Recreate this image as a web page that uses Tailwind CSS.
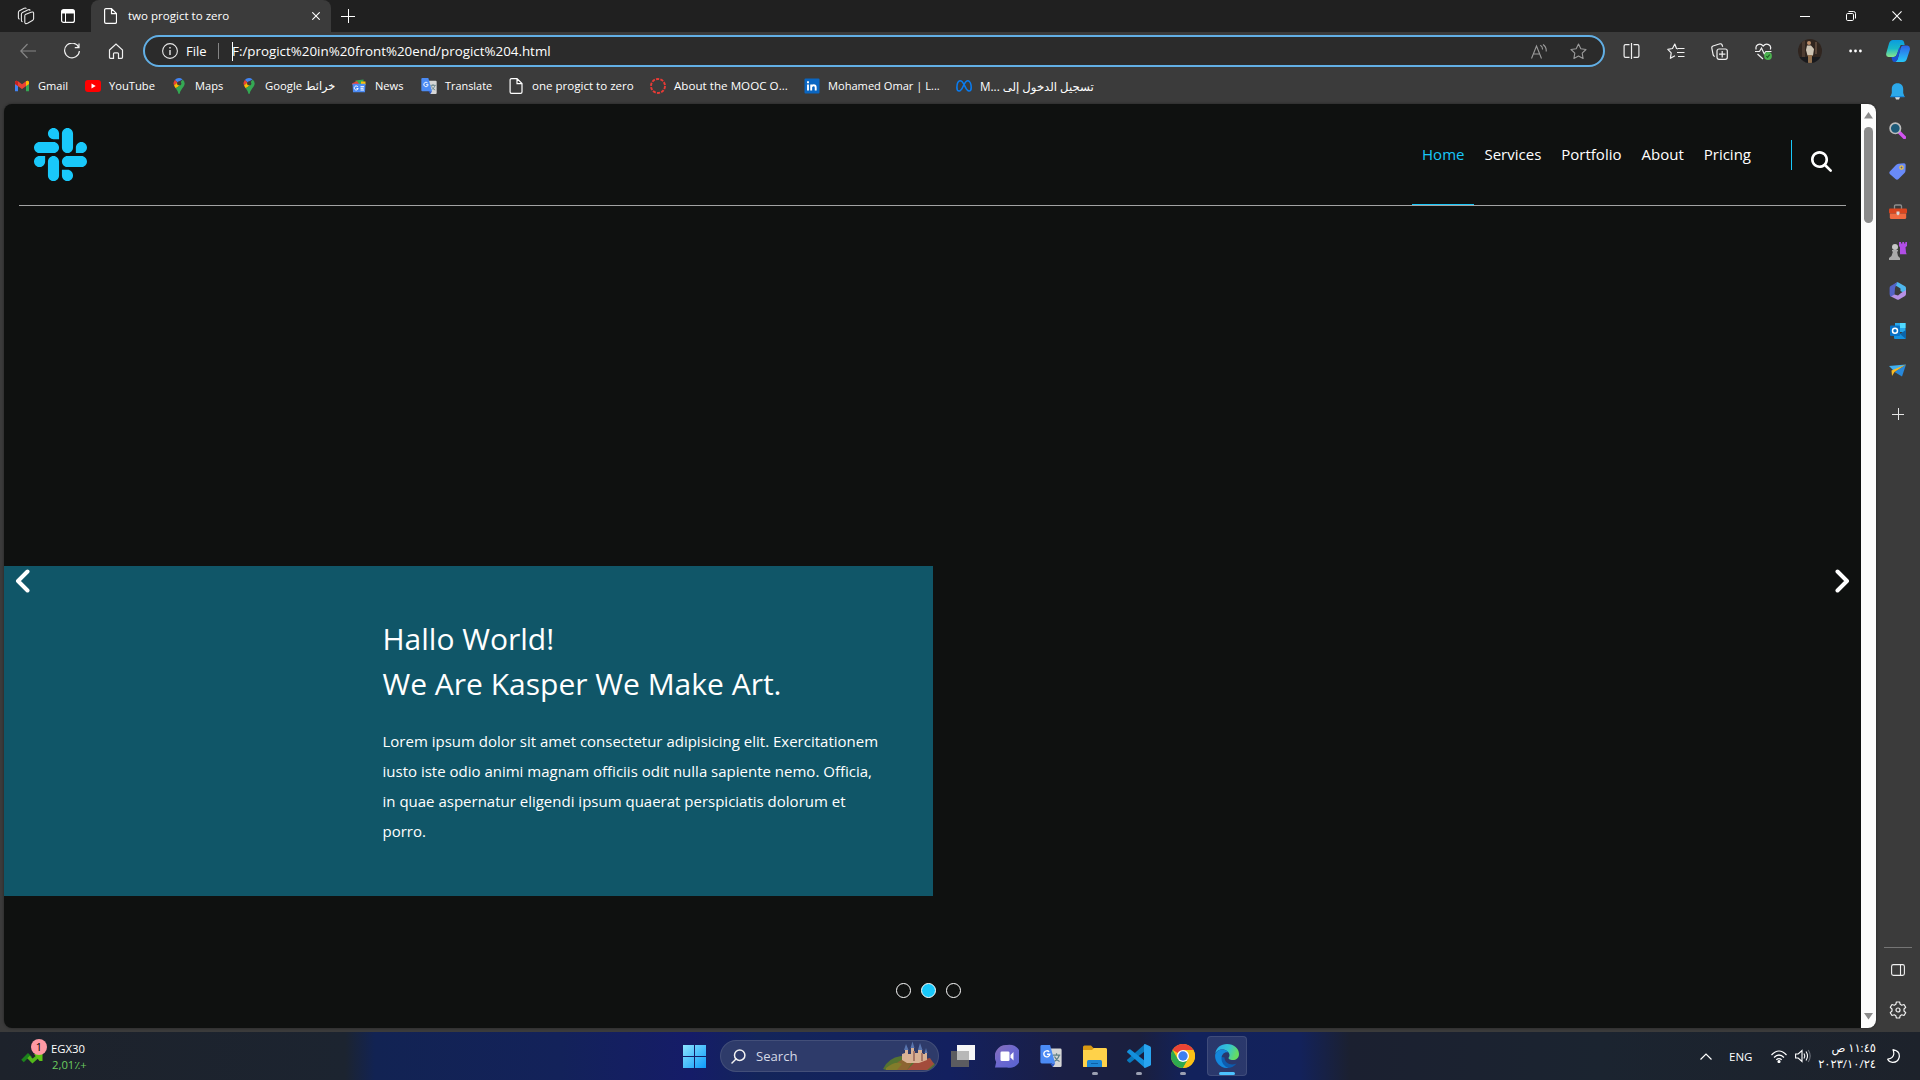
<!DOCTYPE html>
<html lang="en">
<head>
<meta charset="utf-8">
<title>two progict to zero</title>
<script src="https://cdn.jsdelivr.net/npm/@tailwindcss/browser@4"></script>
</head>
<body class="flex h-[1080px] w-[1920px] flex-col overflow-hidden bg-[#3b3b3b] font-['Open_Sans','Noto_Sans','DejaVu_Sans',sans-serif] text-white">
<svg class="hidden">
  <symbol id="file" viewBox="0 0 13 16"><path d="M2 .6h5.500l5 5V14a1.400 1.400 0 0 1-1.400 1.400H2A1.400 1.400 0 0 1 .6 14V2A1.400 1.400 0 0 1 2 .6zM7.500.6v5h5" fill="none" stroke="#fff" stroke-width="1.200"/></symbol>
  <symbol id="pin" viewBox="0 0 11 16"><path d="M5.500 0A5.500 5.500 0 0 0 1.300 2L4 4.300 9 1.400A5.400 5.400 0 0 0 5.500 0z" fill="#4285f4"/><path d="M1.300 2a5.500 5.500 0 0 0-.8 5.500L4 4.300z" fill="#ea4335"/><path d="M.5 7.500c.3.900 1 1.800 1.700 2.800L7.200 7A2.300 2.300 0 0 1 4 4.300z" fill="#fbbc04"/><path d="M9.200 1.500A5.500 5.500 0 0 1 10 8.700C8.500 11 6.700 12.500 6.200 15.500c-.2.700-1.100.7-1.300 0-.4-2.200-1.500-3.600-2.700-5.200L7.200 7a2.200 2.200 0 0 0 0-3z" fill="#34a853"/><circle cx="5.500" cy="5.400" r="1.900" fill="#3b3b3b"/></symbol>
  <symbol id="translate" viewBox="0 0 24 26"><path d="M9 5h13a1.500 1.500 0 0 1 1.500 1.500v17A1.500 1.500 0 0 1 22 25H14z" fill="#d6d6d6"/><path d="M14 12h8M18 10v2M21 12c-.8 3-3 5.500-5.500 7M15.800 13.500c1 2.500 3 4.500 5.500 5.500" stroke="#5f7f86" stroke-width="1.300" fill="none"/><path d="M2 1h9l5.500 20H2A1.500 1.500 0 0 1 .5 19.500v-17A1.500 1.500 0 0 1 2 1z" fill="#4b8bf5"/><path d="M11 21h5.500L14 25z" fill="#2a56c6"/><path d="M10 8.500a3.300 3.300 0 1 0 .8 2.600H7.700" fill="none" stroke="#fff" stroke-width="1.500"/></symbol>
</svg>

<!-- Tab strip -->
<header class="flex h-8 shrink-0 bg-[#202020]">
  <div class="flex w-[91px] items-center pl-[17px]">
    <svg class="h-[18px] w-[18px]" viewBox="0 0 18 18" fill="none" stroke="#e8e8e8" stroke-width="1.100"><path d="M8.300 7.600 14 5.200q2.400-.8 2.600.9v5.700q0 1.200-1.200 1.800l-4.800 2.700q-2.400 1-2.800-.8V9q0-1 .5-1.400z"/><path d="M5.600 14.700q-1.200-.2-1.200-1.500V7.300q0-1.200 1.100-1.800l5.700-2.700q1.600-.5 2 .7M2.500 12.200q-1.100-.3-1.100-1.400V5.500q0-1.100 1-1.700l4.800-2.500q1.600-.6 2.200.3"/></svg>
    <svg class="ml-[26px] h-[14px] w-[14px]" viewBox="0 0 14 14"><rect x=".6" y=".6" width="12.800" height="12.800" rx="2" fill="none" stroke="#fff" stroke-width="1.200"/><path d="M1 1h12v3.500H1z" fill="#fff"/><path d="M4.500 4v9" stroke="#fff"/></svg>
  </div>
  <div class="flex w-[240px] items-center rounded-t-lg bg-[#3b3b3b] pl-[13px]">
    <svg class="h-4 w-[13px]"><use href="#file"/></svg>
    <span class="ml-[11px] w-[183.5px] whitespace-nowrap text-[11.550px] leading-4">two progict to zero</span>
    <svg class="h-2 w-2" viewBox="0 0 8 8" stroke="#fff" stroke-width="1.100"><path d="M.3.300l7.400 7.400M7.700.3.300 7.700"/></svg>
  </div>
  <div class="flex w-[34px] items-center justify-center"><svg class="h-[14px] w-[14px]" viewBox="0 0 14 14" stroke="#fff"><path d="M7.500 0v14M0 7.500h14"/></svg></div>
  <div class="ml-auto flex items-center gap-9 pr-[18px]">
    <svg class="h-[10px] w-[10px]" viewBox="0 0 10 10" stroke="#fff"><path d="M0 5.500h10"/></svg>
    <svg class="h-[10px] w-[10px]" viewBox="0 0 10 10" fill="none" stroke="#fff"><rect x=".5" y="2.500" width="7" height="7" rx="1.200"/><path d="M2.500.500H7.500Q9.500.500 9.500 2.500V7.500"/></svg>
    <svg class="h-[10px] w-[10px]" viewBox="0 0 11 11" stroke="#fff" stroke-width="1.200"><path d="M.5.500l10 10M10.500.5.500 10.500"/></svg>
  </div>
</header>

<div class="flex h-[1000px] shrink-0">
  <div class="flex w-[1876px] flex-col">
    <!-- Address bar -->
    <div class="flex h-[38px] items-center">
      <div class="flex w-[143px] items-center gap-7 pl-5">
        <svg class="h-4 w-4" viewBox="0 0 16 16" fill="none" stroke="#858585" stroke-width="1.200"><path d="M7.500 1 .8 8l6.700 7M.8 8H16"/></svg>
        <svg class="h-4 w-4" viewBox="0 0 16 16" fill="none" stroke="#f0f0f0" stroke-width="1.200"><path d="M14.800 4.500A7.400 7.400 0 1 0 15.400 8M15 .5v4.200h-4.200"/></svg>
        <svg class="h-4 w-4" viewBox="0 0 16 16" fill="none" stroke="#f0f0f0" stroke-width="1.200"><path d="M1.500 7 8 1l6.500 6v7.300q0 1-1 1h-3v-4.500q0-1-1-1h-3q-1 0-1 1v4.500h-3q-1 0-1-1z"/></svg>
      </div>
      <div class="flex h-8 w-[1462px] items-center rounded-full border-2 border-[#62afe5] bg-[#2b2b2b] pl-[17px] pr-4">
        <svg class="h-4 w-4" viewBox="0 0 16 16" fill="none" stroke="#e8e8e8" stroke-width="1.100"><circle cx="8" cy="8" r="7.400"/><path d="M8 7v5M8 4v1.400" stroke-width="1.400"/></svg>
        <span class="ml-2 w-8 text-[13px] leading-4">File</span>
        <span class="h-4 w-px bg-[#858585]"></span>
        <span class="ml-[13px] h-[19px] w-px bg-white"></span>
        <span class="-ml-px whitespace-nowrap text-[13.360px] leading-4">F:/progict%20in%20front%20end/progict%204.html</span>
        <svg class="ml-auto h-[15px] w-4" viewBox="0 0 16 15" fill="none" stroke="#9b9b9b" stroke-width="1.100"><path d="M.5 14.500 5.500 2l5 12.500M2.300 10h6.400M9.300 1.200q2.400 1.300 2.200 4.300M12 .5q3.600 2.500 3.200 7"/></svg>
        <svg class="ml-[23px] h-[17px] w-[17px]" viewBox="0 0 17 17" fill="none" stroke="#9b9b9b" stroke-width="1.100" stroke-linejoin="round"><path d="m8.500 1 2.300 4.800 5.200.7-3.800 3.700.9 5.300-4.600-2.500-4.600 2.500.9-5.300L1 6.500l5.200-.7z"/></svg>
      </div>
      <div class="flex flex-1 items-center pl-[18px]">
        <svg class="h-4 w-[17px]" viewBox="0 0 17 16" fill="none" stroke="#f0f0f0" stroke-width="1.200"><path d="M8.500 0v16M6.500 1.600H2.500q-1.400 0-1.400 1.400v10q0 1.400 1.400 1.400h4M10.500 1.600h4q1.400 0 1.400 1.400v10q0 1.400-1.400 1.400h-4"/></svg>
        <svg class="ml-[27px] h-[17px] w-[18px]" viewBox="0 0 18 17" fill="none" stroke="#f0f0f0" stroke-width="1.200" stroke-linejoin="round"><path d="M11 5.800 9.500 5.500 7.800 1 5.500 5.500.8 6.300l3.400 3.500-.8 5.500 4.600-2.500M11 5.500h6.500M10 9.500h7.500M11 13.500h6.500"/></svg>
        <svg class="ml-[26px] h-[17px] w-[17px]" viewBox="0 0 17 17" fill="none" stroke="#f0f0f0" stroke-width="1.200"><rect x="6" y="6" width="10.300" height="10.300" rx="2"/><path d="M11.200 8v6.400M8 11.200h6.400M3.800 13.500Q2.500 13 2.200 12L.8 5q-.2-1.500 1.200-2L9 .8q1.500-.3 2 1l.7 2"/></svg>
        <svg class="ml-[27px] h-[17px] w-[17px]" viewBox="0 0 17 17" fill="none" stroke="#f0f0f0" stroke-width="1.200"><path d="M1.200 6.500C-.2 2 5-.8 8.200 3 11.500-.8 17 2 15.300 6.500M0 8.500h4.500L6.500 5l2.800 6 1.500-2.500H16.500M2.500 11l5.500 5"/><circle cx="13" cy="13" r="3.900" fill="#4cb150" stroke="none"/><path d="m11.300 13.200 1.200 1.200 2.200-2.800" stroke="#1e5f22"/></svg>
        <svg class="ml-[26px] h-6 w-6" viewBox="0 0 24 24"><defs><clipPath id="round"><circle cx="12" cy="12" r="12"/></clipPath></defs><g clip-path="url(#round)"><path d="M0 0h24v24H0z" fill="#30251f"/><path d="M4 0h3v24H4z" fill="#4c3b31"/><path d="M17 3h2v12h-2z" fill="#5a4639"/><path d="M0 18h24v6H0z" fill="#191a1e"/><circle cx="11" cy="4" r="2" fill="#b98a67"/><path d="M9 6.500h4l3 3.500-1 6.500H9.500L8 11z" fill="#cfc5b5"/><path d="M10 16h4v8h-4z" fill="#92704e"/></g></svg>
        <svg class="ml-[27px] h-1 w-[13px]" viewBox="0 0 13 4" fill="#fff"><circle cx="1.600" cy="2" r="1.400"/><circle cx="6.500" cy="2" r="1.400"/><circle cx="11.400" cy="2" r="1.400"/></svg>
      </div>
    </div>

    <!-- Bookmarks -->
    <nav class="flex h-[34px] items-center whitespace-nowrap pb-[2px] pl-[14px] text-[11.100px] leading-4">
      <div class="flex w-[71px] items-center gap-2"><svg class="h-3 w-4" viewBox="0 0 16 12"><path d="M1 2v9.200h3V5z" fill="#4285f4"/><path d="M15 2v9.200h-3V5z" fill="#34a853"/><path d="M1 1.800V4l7 5 7-5V1.800q-1.200-2-3-.5L8 4.200 4 1.300Q2.200-.2 1 1.800z" fill="#ea4335"/><path d="M12 1.300V6l3-2V1.800q-1.200-2-3-.5z" fill="#fbbc04"/><path d="M4 1.300V6L1 4V1.800q1.200-2 3-.5z" fill="#c5221f"/></svg>Gmail</div>
      <div class="flex w-[86px] items-center gap-2"><svg class="h-3 w-4" viewBox="0 0 16 12"><rect width="16" height="12" rx="3" fill="red"/><path d="m6.500 3.500 4.200 2.500-4.200 2.500z" fill="#fff"/></svg><span class="text-[11.2px]">YouTube</span></div>
      <div class="flex w-[70px] items-center gap-2"><svg class="h-4 w-4"><use href="#pin"/></svg>Maps</div>
      <div class="flex w-[110px] items-center gap-2"><svg class="h-4 w-4"><use href="#pin"/></svg><span class="text-[11.3px]">Google خرائط</span></div>
      <div class="flex w-[70px] items-center gap-2"><svg class="h-4 w-4" viewBox="0 0 16 16"><path d="m4.500 2.500 8-1V8h-8z" fill="#34a853"/><path d="M1 5.500 6 3l3 4H1.500z" fill="#ea4335"/><path d="M10 3.500h4.500V7H10z" fill="#fbbc04"/><path d="M1.500 5.800h13l-.5 8.500H2z" fill="#4b8bf5"/><path d="M7 9a2 2 0 1 0 .2 1.500H5.500M9.500 8.700h3.500M9.500 10.300h3M9.500 12h3.500" fill="none" stroke="#fff"/></svg>News</div>
      <div class="flex w-[87px] items-center gap-2"><svg class="h-[18px] w-4"><use href="#translate"/></svg><span class="text-[10.900px]">Translate</span></div>
      <div class="flex w-[142px] items-center gap-2"><svg class="h-4 w-4"><use href="#file"/></svg><span class="text-[11.550px]">one progict to zero</span></div>
      <div class="flex w-[154px] items-center gap-2"><svg class="h-4 w-4" viewBox="0 0 16 16"><circle cx="8" cy="8" r="7" fill="none" stroke="#e83b36" stroke-width="1.900" stroke-dasharray="3.200 1.198"/></svg><span class="text-[11.650px]">About the MOOC O...</span></div>
      <div class="flex w-[152px] items-center gap-2"><svg class="h-4 w-4" viewBox="0 0 16 16"><rect x=".5" y=".5" width="15" height="15" rx="1" fill="#0a66c2"/><path d="M4 6.500v6M4 3.300v2M7.200 12.500v-6M7.500 9q.2-1.800 2.200-1.800 2 0 2 2.300v3" fill="none" stroke="#fff" stroke-width="1.900"/></svg><span>Mohamed Omar | L...</span></div>
      <div class="flex items-center gap-2"><svg class="h-4 w-4" viewBox="0 0 16 16"><path d="M8 6.500C6.500 3.500 5.300 2.500 4 2.700 2 3 .9 6.500.9 9.500c0 2.200.8 3.500 2.200 3.500C5.500 13 7 8.500 8 6.500 9.300 4 10.300 2.500 12 2.700c2 .3 3.200 3.800 3.200 6.800 0 2.200-.8 3.500-2.200 3.500C10.500 13 9.500 9 8 6.500z" fill="none" stroke="#0a7cf0" stroke-width="1.600"/></svg><span class="text-[11.700px]">M... تسجيل الدخول إلى</span></div>
    </nav>

    <!-- Web page -->
    <div class="ml-1 flex h-[924px] overflow-hidden rounded-lg bg-[#0f1110] shadow-[0_0_3px_#0006]">
      <main class="flex w-[1857px] flex-col text-[15px]">
        <div class="mx-[15px] flex h-[102px] shrink-0 items-start justify-between border-b border-[#a2a3a3] pl-[15px]">
          <svg class="mt-6 h-[53px] w-[53px]" viewBox="0 32 448 448" fill="#19c8fa"><path d="M94.120 315.100c0 25.900-21.160 47.060-47.060 47.060S0 341 0 315.100c0-25.900 21.160-47.060 47.060-47.060h47.060v47.060zm23.720 0c0-25.900 21.160-47.060 47.060-47.060s47.060 21.160 47.060 47.060v117.840c0 25.900-21.160 47.060-47.060 47.060s-47.060-21.160-47.060-47.060V315.100zm47.060-188.980c-25.900 0-47.060-21.160-47.060-47.060S139 32 164.900 32s47.060 21.160 47.060 47.060v47.060H164.900zm0 23.720c25.900 0 47.060 21.160 47.060 47.060s-21.160 47.060-47.060 47.060H47.060C21.160 243.960 0 222.800 0 196.900s21.160-47.060 47.060-47.060H164.900zm188.980 47.060c0-25.900 21.160-47.060 47.060-47.060 25.900 0 47.060 21.160 47.060 47.060s-21.160 47.060-47.060 47.060h-47.060V196.900zm-23.720 0c0 25.900-21.160 47.060-47.060 47.060-25.900 0-47.060-21.160-47.060-47.060V79.060c0-25.900 21.160-47.060 47.060-47.060 25.900 0 47.060 21.160 47.060 47.060V196.900zM283.100 385.880c25.900 0 47.060 21.160 47.060 47.060 0 25.900-21.160 47.060-47.060 47.060-25.900 0-47.060-21.160-47.060-47.060v-47.060h47.060zm0-23.720c-25.900 0-47.060-21.160-47.060-47.060 0-25.900 21.160-47.060 47.060-47.060h117.840c25.900 0 47.060 21.160 47.060 47.060 0 25.900-21.160 47.060-47.060 47.060H283.100z"/></svg>
          <div class="flex">
            <ul class="flex h-[101px] leading-[101px]">
              <li class="h-[101px] border-b border-[#19c8fa] px-[10px] text-[#19c8fa]">Home</li>
              <li class="px-[10px]">Services</li>
              <li class="px-[10px]">Portfolio</li>
              <li class="px-[10px]">About</li>
              <li class="px-[10px]">Pricing</li>
            </ul>
            <span class="ml-[30px] mt-9 h-[30px] w-px bg-[#19c8fa]"></span>
            <svg class="ml-[19px] mr-[14px] mt-[47px] h-[21px] w-[21px]" viewBox="0 0 512 512" fill="#fff"><path d="M416 208c0 45.900-14.900 88.300-40 122.700L502.600 457.400c12.500 12.500 12.500 32.800 0 45.300s-32.800 12.500-45.300 0L330.700 376c-34.400 25.200-76.800 40-122.700 40C93.100 416 0 322.900 0 208S93.100 0 208 0S416 93.100 416 208zM208 352a144 144 0 1 0 0-288 144 144 0 1 0 0 288z"/></svg>
          </div>
        </div>
        <section class="mt-[360px] flex h-[330px] justify-between">
          <div class="relative w-[929px] bg-[#105668] pl-[378.5px] pt-[50px]">
            <svg class="absolute left-[11px] top-[3px] h-6 w-[15px]" viewBox="0 0 15 24" fill="none" stroke="#fff" stroke-width="4" stroke-linecap="round" stroke-linejoin="round"><path d="M12.500 2.500 3 12l9.500 9.500"/></svg>
            <h2 class="text-[30px] leading-[45px]">Hallo World!<br>We Are Kasper We Make Art.</h2>
            <p class="mt-5 w-[502px] leading-[30px]">Lorem ipsum dolor sit amet consectetur adipisicing elit. Exercitationem iusto iste odio animi magnam officiis odit nulla sapiente nemo. Officia, in quae aspernatur eligendi ipsum quaerat perspiciatis dolorum et porro.</p>
          </div>
          <svg class="mr-[11px] mt-[3px] h-6 w-[15px]" viewBox="0 0 15 24" fill="none" stroke="#fff" stroke-width="4" stroke-linecap="round" stroke-linejoin="round"><path d="M2.500 2.500 12 12l-9.500 9.500"/></svg>
        </section>
        <div class="ml-[891.5px] mt-[87px] flex gap-[10px]">
          <span class="h-[15px] w-[15px] rounded-full border border-white"></span>
          <span class="h-[15px] w-[15px] rounded-full border border-white bg-[#19c8fa]"></span>
          <span class="h-[15px] w-[15px] rounded-full border border-white"></span>
        </div>
      </main>
      <div class="flex w-[15px] flex-col items-center bg-[#fcfcfc]">
        <svg class="mt-2 h-[7px] w-[9px]" viewBox="0 0 9 7"><path d="M4.500 0 9 6.500H0z" fill="#8b8b8b"/></svg>
        <span class="mt-2 h-24 w-[9px] rounded-full bg-[#8b8b8b]"></span>
        <svg class="mb-2 mt-auto h-[7px] w-[9px]" viewBox="0 0 9 7"><path d="M0 0h9L4.500 6.500z" fill="#8b8b8b"/></svg>
      </div>
    </div>
  </div>

  <!-- Sidebar -->
  <aside class="flex w-[43px] flex-col items-center pt-2">
    <svg class="h-[22px] w-6" viewBox="0 0 24 22"><defs><linearGradient id="cp" x2="0" y2="1"><stop stop-color="#0b9be0"/><stop offset=".5" stop-color="#19b8c8"/><stop offset="1" stop-color="#8ae58a"/></linearGradient><linearGradient id="cq" x2="0" y2="1"><stop stop-color="#2c62e8"/><stop offset="1" stop-color="#27c8f8"/></linearGradient></defs><path d="M7 0h8.500q2 0 2.500 2l.7 3h-4L11 14q-1 3-3.500 3h-5Q-.6 17 .3 13L3 3.500Q4 0 7 0z" fill="url(#cp)"/><path d="M17 5.500h4.500q3 .5 2.300 4.500L21 18.500q-1 3.500-4 3.500H8.500Q11 21.500 12 18l2.500-9.500q.7-3 2.500-3z" fill="url(#cq)"/><path d="M5.500 17h2q2.500 0 3.500-3l2-6h1.700L12 18q-1 4-3.500 4-2 0-2.500-2.500z" fill="#1a4fd0"/></svg>
    <svg class="mt-[21px] h-[17px] w-[15px]" viewBox="0 0 15 17"><path d="M5 14h5l-1 2.500H6z" fill="#d8d8d8"/><path d="M7.500.3C3.600.300 1.800 3 1.800 6v4L.4 14h14.200l-1.400-4V6c0-3-1.800-5.700-5.700-5.700z" fill="#2ca9ea"/><path d="M.7 13h13.600l.3 1.200H.4z" fill="#1986d8"/></svg>
    <svg class="mt-[22px] h-[17px] w-[17px]" viewBox="0 0 17 17"><path d="m10.500 10.500 5 5" stroke="#d153f0" stroke-width="3.400" stroke-linecap="round"/><circle cx="6.300" cy="6.300" r="5.200" fill="#1d5a78" stroke="#bdbdbd" stroke-width="1.700"/></svg>
    <svg class="mt-6 h-[17px] w-[17px]" viewBox="0 0 17 17"><path d="M9.500.8 15 .3q1.700 0 1.700 1.700l-.2 5.500Q16.500 9 15.500 10l-6 6q-1.500 1.300-3 0L.8 11q-1-1.200 0-2.500L7 2Q8 1 9.500.8z" fill="#698af8"/><circle cx="12.500" cy="4.500" r="1.600" fill="#4059b9" stroke="#f3c63b" stroke-width="1.300"/></svg>
    <svg class="mt-6 h-4 w-[18px]" viewBox="0 0 18 16"><path d="M5.500 5V2.200Q5.500 1 6.700 1h4.600q1.200 0 1.200 1.200V5" fill="none" stroke="#8e8e8e" stroke-width="1.300"/><rect y="4.500" width="18" height="5" rx="1" fill="#d8451f"/><path d="M.8 9.500h16.400v4q0 1.500-1.500 1.500H2.300Q.8 15 .8 13.500z" fill="#f06a40"/><path d="M7.500 7.500h3V10L9 11.500 7.500 10z" fill="#d9d9d9"/></svg>
    <svg class="mt-[22px] h-[18px] w-[18px]" viewBox="0 0 18 18"><path d="M10 0h2v1.500h1.300V0h1.800v1.500h1.200V0H18v4l-1.500 1.200.5 5.300.7 1.800h-6.700L11 5.200 10 4z" fill="#b14ee6"/><circle cx="6" cy="5" r="3" fill="#c6c6c6"/><path d="M3 8h6v1.500H8l1 4.500 2 2v2H0v-2l2.500-2L4 9.500H3z" fill="#aaa"/></svg>
    <svg class="mt-[22px] h-[18px] w-[18px]" viewBox="0 0 18 18"><path d="M8.500 0 16 4.300q1 .7 1 2V12l-5.500-3V6.500L5 2.500z" fill="#4fb7ed"/><path d="M8.500 0 6 6 5.500 13 2 15Q.6 14 .6 12V6q0-1.500 1-2z" fill="#5463c8"/><path d="M17 8v4q0 1.200-1 2l-6 3.600q-1 .5-2 0L2 14.500l3.500-2 3.500 1 3-2.500z" fill="#b691e6"/></svg>
    <svg class="mt-[23px] h-4 w-4" viewBox="0 0 16 16"><path d="M5 0h10.500v9H5z" fill="#28a8ea"/><path d="M10 0h5.500v5H10z" fill="#50d9ff"/><path d="M4 8l6 3 6-4v8q0 1-1 1H5q-1 0-1-1z" fill="#1490df"/><path d="M10 11l6 5V7z" fill="#0c64a8"/><rect y="2.500" width="10" height="10.500" rx="1" fill="#0870c4"/><circle cx="5" cy="7.700" r="2.500" fill="none" stroke="#fff" stroke-width="1.500"/></svg>
    <svg class="mt-[25px] h-[14px] w-[17px]" viewBox="0 0 17 14"><path d="M0 2 17 .5 5 7z" fill="#40aff0"/><path d="M17 .5 13 12.500 5.500 8z" fill="#2788dc"/><path d="M17 .5 2.500 6.500 3 12l2.500-4z" fill="#f8ba24"/></svg>
    <svg class="mt-[30px] h-3 w-3" viewBox="0 0 12 12" stroke="#e5e5e5"><path d="M6.500 0v12M0 6.500h12"/></svg>
    <span class="mt-auto h-px w-7 bg-[#757575]"></span>
    <svg class="mt-4 h-3 w-[14px]" viewBox="0 0 14 12" fill="none" stroke="#f0f0f0" stroke-width="1.100"><rect x=".6" y=".6" width="12.800" height="10.800" rx="1.800"/><path d="M9.500.500v11"/></svg>
    <svg class="mb-[13px] mt-[25px] h-[18px] w-[18px]" viewBox="0 0 18 18" fill="none" stroke="#f0f0f0" stroke-width="1.200" stroke-linejoin="round"><circle cx="9" cy="9" r="2"/><path d="M7.400 1h3.200l.6 2.300 1.500.9L15 3.500l1.700 2.800L15 8v2l1.700 1.700L15 14.500l-2.300-.7-1.500.9-.6 2.300H7.400l-.6-2.300-1.500-.9-2.300.7-1.700-2.800L3 10V8L1.300 6.300 3 3.500l2.300.7 1.500-.9z"/></svg>
  </aside>
</div>

<!-- Taskbar -->
<footer class="flex h-12 shrink-0 items-center bg-[linear-gradient(90deg,#1d222b_0,#1c2430_345px,#122353_375px,#13225a_560px,#151c68_690px,#13255a_760px,#13205f_950px,#1a1f45_1060px,#1a1f3e_1140px,#12225c_1190px,#13225b_1300px,#1b2030_1350px,#1b2430_1600px,#1d222b_1920px)]">
  <div class="flex w-[683px] items-center pl-[21px]">
    <div class="relative h-8 w-[30px]">
      <svg class="absolute left-0 top-3 h-3 w-[23px]" viewBox="0 0 23 12" fill="none" stroke-width="3.600"><path d="M1.500 9 7 3.500l2.500 2.500" stroke="#1c831c"/><path d="m7.500 5 4 4 8-7" stroke="#52b81a"/><path d="M13 2h8.500v7h-3" fill="#5fc314" stroke="none"/></svg>
      <span class="absolute -top-[1px] left-[10px] h-4 w-4 rounded-full bg-[#ff99a4] text-center text-[11px] leading-4 text-black">1</span>
    </div>
    <div class="pt-[2px] text-[11.3px] leading-4"><div>EGX30</div><div class="pl-px text-[#6ccb5f]">2,01٪+</div></div>
  </div>
  <svg class="h-[23px] w-[23px]" viewBox="0 0 23 23"><defs><linearGradient id="win" x2="1" y2="1"><stop stop-color="#8be3ff"/><stop offset="1" stop-color="#0d9bfa"/></linearGradient></defs><path d="M0 0h11v11H0zM12 0h11v11H12zM0 12h11v11H0zM12 12h11v11H12z" fill="url(#win)"/></svg>
  <div class="ml-[14px] flex h-[37px] w-[219px] max-h-8 items-center overflow-hidden rounded-full border border-white/10 bg-[#2e3b6a] pl-[10px]">
    <svg class="h-[15px] w-[15px]" viewBox="0 0 15 15" fill="none" stroke="#f2f2f2" stroke-width="1.500" stroke-linecap="round"><circle cx="8.700" cy="6.200" r="5.200"/><path d="M5 10 1 14"/></svg>
    <span class="ml-[10px] text-[13.1px] leading-4 text-[#d5d9e6]">Search</span>
    <svg class="ml-auto mr-[3px] h-[30px] w-[52px]" viewBox="0 0 52 30"><path d="M0 28Q5 17 18 15l20 2 13 5 1 2-5 5H3z" fill="#557331"/><path d="M14 22q8-7 16-2l-6 9H8z" fill="#8d6432"/><path d="m33 20 14-3 4 6-7 6H24z" fill="#a34c3c"/><path d="M3 27q10-8 16-4l-5 6H3z" fill="#827c2b"/><path d="M19 19v-6l3-1V9h3v4h3V7h3v5h4V9h4v4h3v-1h2v7l-8 3H24z" fill="#d9b295"/><path d="M30 10h2v10h-2zM38 12h2v8h-2z" fill="#a97867"/><path d="m21 9 2-6 2.500 6zM27.500 7l2-6.500 2 6.500zM35 9l2-7 2.500 7zM41.500 12l1.500-5 1.500 5z" fill="#5874ad"/></svg>
  </div>
  <svg class="ml-3 h-6 w-6" viewBox="0 0 24 24"><path d="M6 1h18v15H6z" fill="#f6f6f6"/><path d="M0 7h18v16H0z" fill="#5c5c60"/><path d="M6 7h12v9H6z" fill="#b8b8b8"/></svg>
  <svg class="ml-5 h-6 w-6" viewBox="0 0 24 24"><defs><linearGradient id="chat" x2="1" y2="1"><stop stop-color="#8a6fb8"/><stop offset=".5" stop-color="#6b68d0"/><stop offset="1" stop-color="#5562d0"/></linearGradient></defs><path d="M12 1a11.500 11.500 0 1 1 0 22.500H0l1.200-5.500A11.500 11.500 0 0 1 12 1z" fill="url(#chat)"/><rect x="5.500" y="7.500" width="9" height="9.500" rx="1.300" fill="#fff"/><path d="m15.500 11 3-3v8.500l-3-3z" fill="#fff"/></svg>
  <svg class="ml-5 h-6 w-6"><use href="#translate"/></svg>
  <div class="ml-5 flex h-12 w-6 flex-col items-center pt-3">
    <svg class="h-6 w-6 shrink-0" viewBox="0 0 24 24"><path d="M0 3q0-1.500 1.500-1.500H8L10.500 4H22q2 0 2 2v17H0z" fill="#d99a12"/><path d="M0 6h9l2-2h11.500Q24 4 24 5.500V22q0 1-1 1H1q-1 0-1-1z" fill="#ffd24a"/><path d="M4 23v-5.500Q4 16 5.500 16h12q1.500 0 1.500 1.500V23z" fill="#1d86d4"/><path d="M8 19.500h7" stroke="#0d5fa5"/></svg>
    <span class="mt-1 h-[3px] w-1.5 rounded-full bg-[#9ba0b2]"></span>
  </div>
  <div class="ml-5 flex h-12 w-6 flex-col items-center pt-3">
    <svg class="h-6 w-6 shrink-0" viewBox="0 0 24 24"><path d="M18 0v7L3.500 18.500q-.8.500-1.500 0l-1.600-1.500q-.7-.8 0-1.500z" fill="#0878bc"/><path d="M18 24v-7L3.500 5.500q-.8-.5-1.500 0L.4 7q-.7.800 0 1.500z" fill="#1390dc"/><path d="M17 .5 18 0l5 2.300q1 .5 1 1.500v16.400q0 1-1 1.500L18 24l-1-.7z" fill="#28a4f0"/></svg>
    <span class="mt-1 h-[3px] w-1.5 rounded-full bg-[#9ba0b2]"></span>
  </div>
  <div class="ml-5 flex h-12 w-6 flex-col items-center pt-3">
    <svg class="h-6 w-6 shrink-0" viewBox="0 0 24 24"><circle cx="12" cy="12" r="12" fill="#fbc116"/><path d="M12 12 1.600 6A12 12 0 0 1 22.400 6z" fill="#ea4335"/><path d="M1.600 6A12 12 0 0 0 12 24l5.200-9L12 12 6.800 15z" fill="#2da94f"/><path d="M12 6h10.400A12 12 0 0 1 12 24l5.200-9z" fill="#fbc116"/><circle cx="12" cy="12" r="6" fill="#fff"/><circle cx="12" cy="12" r="4.700" fill="#3f7fee"/></svg>
    <span class="mt-1 h-[3px] w-1.5 rounded-full bg-[#9ba0b2]"></span>
  </div>
  <div class="ml-3 flex h-[46px] max-h-[46px] w-10 flex-col items-center py-[3px]">
    <div class="flex h-10 w-10 flex-col items-center rounded border border-white/10 bg-white/10 pt-[7px]">
      <svg class="h-6 w-6 shrink-0" viewBox="0 0 24 24"><defs><linearGradient id="eg" x2="1" y2=".3"><stop stop-color="#28a6f0"/><stop offset=".6" stop-color="#35c6cf"/><stop offset="1" stop-color="#65dc62"/></linearGradient></defs><path d="M0 12a12 12 0 0 0 12 12c4 0 7-1.500 9.500-4.500-6 2.500-12-.5-12-6z" fill="#0e5cae"/><path d="M.2 10C1 3.500 6 0 12 0c7 0 12 4.500 12 10 0 4-3 6-6 6-3.500 0-4.500-1.300-4.500-2 0-.6 1-1 1-3C14.500 8 11 5.500 7.500 5.500 4 5.500 1 7.500.2 10z" fill="url(#eg)"/><path d="M.1 11C1 7.500 4 5.500 7.500 5.500c3 0 5 1.500 6 3-4-1-7 2-7 6 0 4 2.500 8 7 9.400C6 24.700 0 18.500.1 11z" fill="#1588dc"/></svg>
      <span class="mt-[4px] h-[3px] w-4 shrink-0 rounded-full bg-[#4cc2ff]"></span>
    </div>
  </div>
  <div class="ml-auto flex items-center pr-5">
    <svg class="h-[7px] w-3" viewBox="0 0 12 7" fill="none" stroke="#fff" stroke-width="1.200"><path d="m.5 6.500 5.500-5.500 5.500 5.500"/></svg>
    <span class="ml-[17px] w-[42px] pt-px text-[11.5px] leading-4">ENG</span>
    <svg class="h-[13px] w-4" viewBox="0 0 16 13" fill="none" stroke="#fff" stroke-width="1.200"><path d="M.5 5q7.500-8 15 0M3 7.500q5-5 10 0M5.300 9.800q2.700-2.500 5.400 0"/><circle cx="8" cy="11.500" r="1" fill="#fff"/></svg>
    <svg class="ml-2 h-[14px] w-4" viewBox="0 0 16 14" fill="none" stroke="#fff" stroke-width="1.100"><path d="M.6 5h2.600L7 1.500v11L3.200 9H.6zM9 4.500q1.600 2.500 0 5M11 2.500q3 4.500 0 9"/><path d="M13.200 1q4 6 0 12" stroke="#6b7079"/></svg>
    <div dir="rtl" class="w-[65px] text-[11.5px] leading-4"><div>١١:٤٥ ص</div><div class="tracking-[-0.7px]">٢٠٢٣/١٠/٢٤</div></div>
    <svg class="ml-[11px] h-[14px] w-[13px]" viewBox="0 0 13 14" fill="none" stroke="#fff" stroke-width="1.200"><path d="M6 .7Q13 2 12.300 8 11 13.500 5.500 13.300 2 13 .7 10.200 6.500 9 6.800 5 6.900 2.500 6 .7z" stroke-linejoin="round"/></svg>
  </div>
</footer>
</body>
</html>
